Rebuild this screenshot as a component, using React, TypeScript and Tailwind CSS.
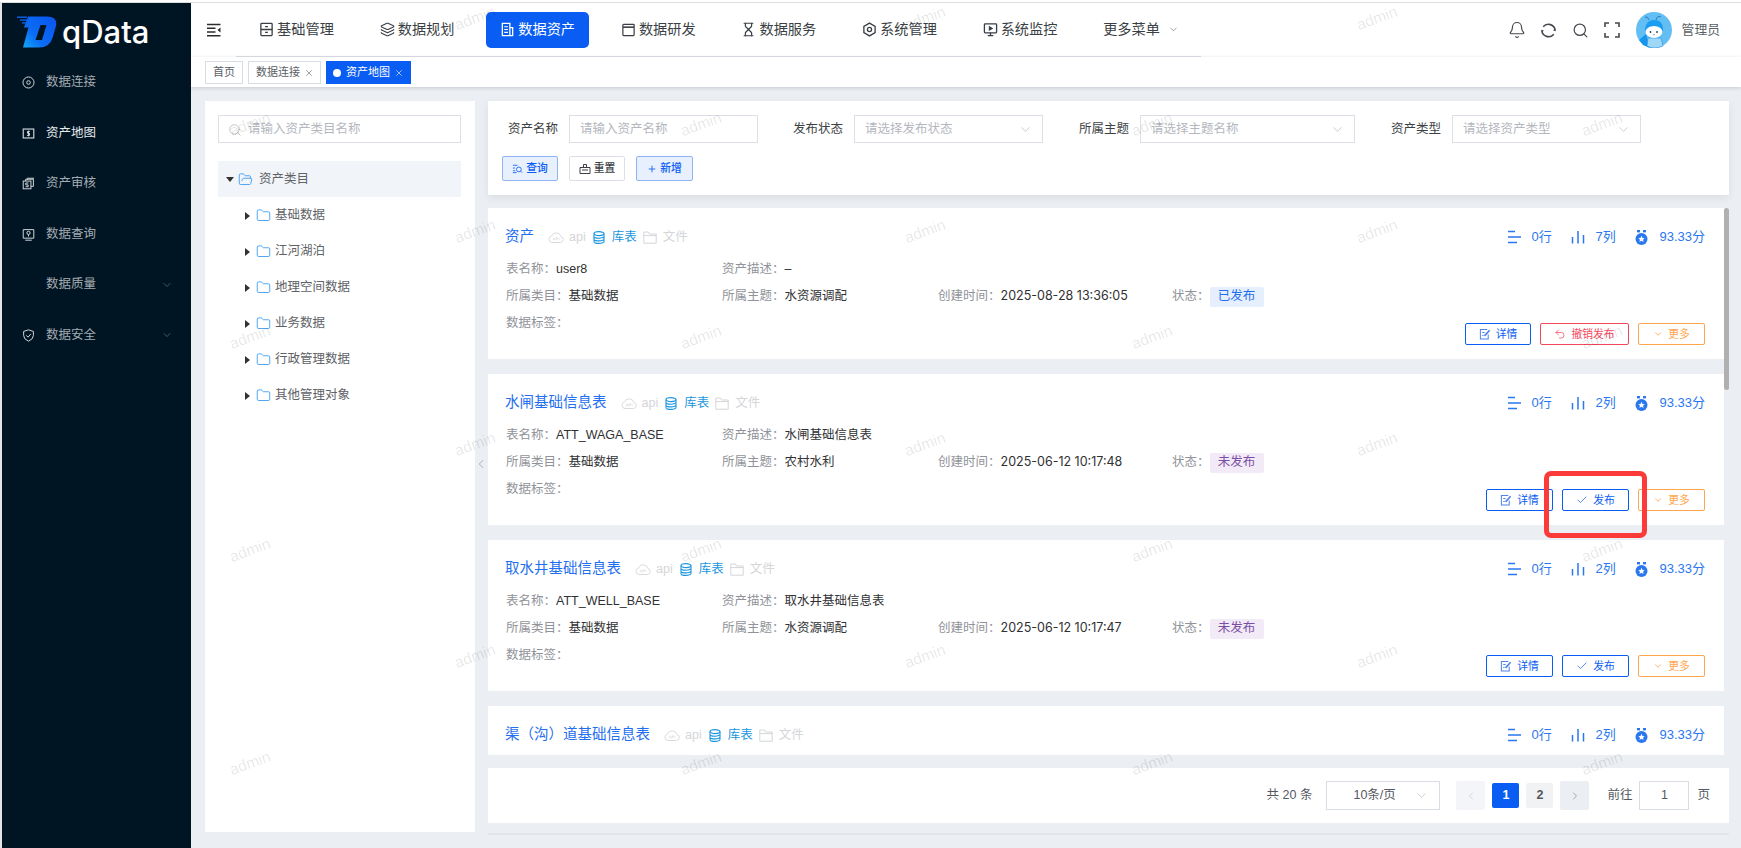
import { useMemo } from 'react'
import {
  Bell, ChevronDown, ChevronLeft, ChevronRight, Check, Folder, FolderOpen, Hourglass, Layers, Plus, Search, Undo2, X,
} from 'lucide-react'

const sans = "font-['Liberation_Sans','Noto_Sans_CJK_SC',sans-serif]"

interface IconProps {
  className?: string
}

function Svg({ className, children, box = '0 0 16 16' }: IconProps & { children: React.ReactNode; box?: string }) {
  return (
    <svg viewBox={box} fill="none" stroke="currentColor" strokeWidth="1.2" className={className}>
      {children}
    </svg>
  )
}

function Logo() {
  return (
    <svg viewBox="0 0 40 32" className="h-[32px] w-[40px]">
      <defs>
        <linearGradient id="logoFill" x1="0" y1="1" x2="1" y2="0.2">
          <stop offset="0" stopColor="#12a8f8" />
          <stop offset="0.4" stopColor="#0b6cf4" />
          <stop offset="1" stopColor="#0a58f0" />
        </linearGradient>
      </defs>
      <path
        fillRule="evenodd"
        d="M11 0.5 H30 Q40.5 0.5 39 10 L35.5 22 Q32.5 31.5 22 31.5 H6 L11.5 11.5 H7 Z M23.5 9 H29.5 L25 24 H18.5 Z"
        fill="url(#logoFill)"
      />
      <g fill="#0b62f2">
        <rect x="0" y="0.5" width="10" height="1.4" />
        <rect x="3" y="3.4" width="8" height="1.4" />
        <rect x="5" y="6.2" width="6" height="1.4" />
      </g>
    </svg>
  )
}

function Avatar() {
  return (
    <svg viewBox="0 0 36 36" className="h-[36px] w-[36px]">
      <circle cx="18" cy="18" r="18" fill="#63bff3" />
      <path d="M3 28 L10 22 L14 36 L7 33 Z" fill="#1496ee" />
      <path d="M12 26 H25 L27 34 Q18 38 11 34 Z" fill="#9fd8f7" stroke="#2a8fd8" strokeWidth="0.6" />
      <path d="M9 17 Q10 8 18 8 Q27 8 27 17 Q27 26 18 26 Q9 26 9 17 Z" fill="#1a9cf0" />
      <ellipse cx="18" cy="20" rx="8.5" ry="6" fill="#ffffff" />
      <circle cx="14.5" cy="20" r="0.9" fill="#25424f" />
      <circle cx="21" cy="20" r="0.9" fill="#25424f" />
      <path d="M17 22.5 Q18 23.5 19 22.5" stroke="#25424f" strokeWidth="0.5" fill="none" />
      <path d="M13 8 Q12 4 9 5 M20 8 Q21 3 25 5" stroke="#1a6fb0" strokeWidth="0.8" fill="none" />
    </svg>
  )
}

function MenuIcon({ name }: { name: string }) {
  const cls = 'h-[15px] w-[15px] shrink-0'
  if (name === 'base')
    return (
      <Svg className={cls}>
        <rect x="2" y="1.5" width="12" height="13" rx="0.8" strokeWidth="1.4" />
        <path d="M2 8 H14 M6.5 5 H9.5 M6.5 11 H9.5" strokeWidth="1.4" />
      </Svg>
    )
  if (name === 'plan') return <Layers className={cls} strokeWidth={1.8} />
  if (name === 'asset')
    return (
      <Svg className={cls}>
        <path d="M2.5 1.5 H10.5 V14.5 H2.5 Z M10.5 6 H13.5 V14.5 H10.5" strokeWidth="1.4" />
        <path d="M4.5 5 H8.5 M4.5 8 H8.5 M4.5 11 H8.5" strokeWidth="1.2" />
      </Svg>
    )
  if (name === 'dev')
    return (
      <Svg className={cls}>
        <rect x="2" y="2.5" width="12" height="12" rx="0.8" strokeWidth="1.3" />
        <path d="M2 5.5 H14" strokeWidth="1.7" />
      </Svg>
    )
  if (name === 'service') return <Hourglass className={cls} strokeWidth={1.9} />
  if (name === 'system')
    return (
      <Svg className={cls}>
        <path d="M8 1.2 L14 4.6 V11.4 L8 14.8 L2 11.4 V4.6 Z" strokeWidth="1.4" />
        <circle cx="8" cy="8" r="2.2" strokeWidth="1.4" />
      </Svg>
    )
  return (
    <Svg className={cls}>
      <rect x="1.5" y="2" width="13" height="9.5" rx="0.8" strokeWidth="1.4" />
      <path d="M8 11.5 V14.5 M5 14.5 H11" strokeWidth="1.4" />
      <path d="M6.8 5 L9.8 6.8 L6.8 8.5 Z" fill="currentColor" />
    </Svg>
  )
}

function SideIcon({ name }: { name: string }) {
  const cls = 'h-[13px] w-[13px]'
  if (name === 'link')
    return (
      <Svg className={cls}>
        <circle cx="8" cy="8" r="6.8" />
        <circle cx="8" cy="8" r="2.2" />
      </Svg>
    )
  if (name === 'map')
    return (
      <Svg className={cls}>
        <rect x="1.5" y="2.5" width="13" height="11" strokeWidth="1.4" />
        <path d="M9.8 5.4 H6.8 V7.8 H9.2 V10.4 H6.2 M8 4.5 V11.5" />
      </Svg>
    )
  if (name === 'audit')
    return (
      <Svg className={cls}>
        <rect x="1.5" y="5" width="9.5" height="9.5" />
        <path d="M4.5 5 V2.8 H14 V11.5 H11 M6.5 2.8 V1.5 H14.8" />
        <path d="M8 7.4 H4.6 V9.7 H7.6 V12 H4.4" />
      </Svg>
    )
  if (name === 'query')
    return (
      <Svg className={cls}>
        <path d="M1.5 2 H14.5 V12.5 H1.5 Z M4 15 H12" />
        <circle cx="8" cy="6" r="2" />
        <path d="M8 8 V10.5" />
      </Svg>
    )
  return (
    <Svg className={cls}>
      <path d="M8 1 L14 3 V8 Q14 12.5 8 15 Q2 12.5 2 8 V3 Z" />
      <path d="M5.2 7.8 L7.4 10 L11 6" />
    </Svg>
  )
}

const sideItems = [
  { label: '数据连接', icon: 'link' },
  { label: '资产地图', icon: 'map', active: true },
  { label: '资产审核', icon: 'audit' },
  { label: '数据查询', icon: 'query' },
  { label: '数据质量', arrow: true },
  { label: '数据安全', icon: 'safe', arrow: true },
]

function Sidebar() {
  return (
    <aside className="z-10 flex w-[189px] shrink-0 flex-col bg-[#001524]">
      <div className="flex h-[54.5px] items-start pl-[15px] pt-[13px]">
        <Logo />
        <span className="-mt-[6px] ml-[5px] font-['Inter',sans-serif] text-[31px] font-medium leading-[44px] text-white">qData</span>
      </div>
      {sideItems.map((item) => (
        <div key={item.label} className={`flex h-[50.5px] items-center text-[12.5px] ${item.active ? 'text-[#e8ebed]' : 'text-[#a3abb1]'}`}>
          <span className="flex w-[44px] justify-end pr-[11px] text-[#d5d9dc]">{item.icon && <SideIcon name={item.icon} />}</span>
          <span>{item.label}</span>
          {item.arrow && <ChevronDown className="ml-auto mr-[18px] h-[12px] w-[12px] text-[#8a949b]" strokeWidth={1} />}
        </div>
      ))}
    </aside>
  )
}

const navItems = [
  { label: '基础管理', icon: 'base' },
  { label: '数据规划', icon: 'plan' },
  { label: '数据资产', icon: 'asset', active: true },
  { label: '数据研发', icon: 'dev' },
  { label: '数据服务', icon: 'service' },
  { label: '系统管理', icon: 'system' },
  { label: '系统监控', icon: 'monitor' },
]

function Header() {
  return (
    <header className="flex h-[54px] bg-white">
      <div className="flex w-[45px] shrink-0 items-center justify-center">
        <svg viewBox="0 0 15 14" className="h-[14px] w-[15px] text-[#2c2c2c]" fill="none" stroke="currentColor" strokeWidth="1.4">
          <path d="M1 1.5 H14.5 M1 5.3 H9.5 M1 9 H9.5 M1 12.8 H14.5" />
          <path d="M14.5 4.6 L11.5 7.1 L14.5 9.6 Z" fill="currentColor" stroke="none" />
        </svg>
      </div>
      <nav className="flex h-[54px] w-[965px] shrink-0 items-center gap-[17.6px] border-b border-[#dcdfe6] pl-[9px] text-[14.2px] text-[#3a3f45]">
        {navItems.map((item) => (
          <div
            key={item.label}
            className={`flex h-[36px] w-[103px] shrink-0 items-center justify-center gap-[3px] rounded-[5px] ${item.active ? 'bg-[#0a5df2] text-white' : ''}`}
          >
            <MenuIcon name={item.icon} />
            <span>{item.label}</span>
          </div>
        ))}
        <div className="flex items-center gap-[8px] pl-[14px]">
          <span>更多菜单</span>
          <ChevronDown className="h-[11px] w-[11px] text-[#70757c]" strokeWidth={1.5} />
        </div>
      </nav>
      <div className="flex flex-1 items-center justify-end pr-[21px] text-[#44494f]">
        <Bell className="h-[18px] w-[18px]" strokeWidth={1.6} />
        <svg viewBox="0 0 16 16" className="ml-[14px] h-[17px] w-[17px]" fill="none" stroke="currentColor" strokeWidth="1.5">
          <path d="M3 4.5 A6.4 6.4 0 0 1 14.3 8 M13 11.5 A6.4 6.4 0 0 1 1.7 8" />
          <path d="M1.2 7.4 L1.9 9.6 L3.7 8 M14.8 8.6 L14.1 6.4 L12.3 8" fill="currentColor" stroke="none" />
        </svg>
        <Search className="ml-[15px] h-[17px] w-[17px]" strokeWidth={1.7} />
        <svg viewBox="0 0 16 16" className="ml-[15px] h-[16px] w-[16px]" fill="none" stroke="currentColor" strokeWidth="1.6">
          <path d="M1 5 V1 H5 M11 1 H15 V5 M15 11 V15 H11 M5 15 H1 V11" />
        </svg>
        <span className="ml-[16px]"><Avatar /></span>
        <span className="ml-[10px] text-[12.8px] text-[#5a5f66]">管理员</span>
      </div>
    </header>
  )
}

function TagsBar() {
  return (
    <div className="z-10 flex h-[30px] items-start gap-[5px] bg-white pl-[14px] pt-[4px] text-[11px] text-[#5a5e66] shadow-[0_1px_4px_rgba(0,21,41,0.16)]">
      <span className="flex h-[23px] items-center border border-[#d8dce5] px-[7px]">首页</span>
      <span className="flex h-[23px] w-[73px] items-center gap-[4px] border border-[#d8dce5] pl-[7px]">
        数据连接
        <X className="h-[10px] w-[10px]" strokeWidth={1.4} />
      </span>
      <span className="flex h-[23px] w-[85px] items-center gap-[4px] bg-[#0a5df2] pl-[7px] text-white">
        <span className="h-[8px] w-[8px] rounded-full bg-white" />
        <span className="ml-[1px]">资产地图</span>
        <X className="h-[10px] w-[10px]" strokeWidth={1.4} />
      </span>
    </div>
  )
}

const treeItems = ['基础数据', '江河湖泊', '地理空间数据', '业务数据', '行政管理数据', '其他管理对象']

function TreePanel() {
  return (
    <section className="h-[731px] w-[270px] shrink-0 bg-white px-[13px] pt-[14px] text-[12.5px] text-[#606266]">
      <div className="relative flex h-[28px] w-[243px] items-center border border-[#dcdfe6] pl-[29px] text-[#b4b7be]">
        <Search className="absolute left-[9px] top-[7px] h-[14px] w-[14px]" strokeWidth={1.4} />
        请输入资产类目名称
      </div>
      <div className="mt-[18px] flex h-[36px] w-[243px] items-center bg-[#f1f4f8] pt-[1px]">
        <span className="ml-[8px] h-0 w-0 border-x-[4px] border-t-[5px] border-x-transparent border-t-[#333]" />
        <FolderOpen className="ml-[4px] h-[15px] w-[15px] text-[#3b9af0]" strokeWidth={1.4} />
        <span className="ml-[6px]">资产类目</span>
      </div>
      {treeItems.map((t) => (
        <div key={t} className="flex h-[36px] items-center pt-[1px]">
          <span className="ml-[27px] h-0 w-0 border-y-[4px] border-l-[5px] border-y-transparent border-l-[#333]" />
          <Folder className="ml-[6px] h-[15px] w-[15px] text-[#3b9af0]" strokeWidth={1.4} />
          <span className="ml-[4px]">{t}</span>
        </div>
      ))}
    </section>
  )
}

function Field({ label, placeholder, width, select, gap = 35 }: { label: string; placeholder: string; width: number; select?: boolean; gap?: number }) {
  return (
    <div className="flex items-center" style={{ marginRight: gap }}>
      <span className="mr-[11px] w-[50px] shrink-0 whitespace-nowrap text-[#3c3f44]">{label}</span>
      <div className="flex h-[28px] items-center justify-between border border-[#dcdfe6] pl-[10px] pr-[9px] text-[#b4b7be]" style={{ width }}>
        <span>{placeholder}</span>
        {select && <ChevronDown className="h-[15px] w-[15px] text-[#b4b7be]" strokeWidth={1.1} />}
      </div>
    </div>
  )
}

function FilterPanel() {
  return (
    <section className="h-[94px] bg-white pl-[14px] pt-[14px] text-[12.5px] shadow-[0_3px_8px_rgba(0,21,41,0.07)]">
      <div className="flex pl-[6px]">
        <Field label="资产名称" placeholder="请输入资产名称" width={189} />
        <Field label="发布状态" placeholder="请选择发布状态" width={189} select gap={36} />
        <Field label="所属主题" placeholder="请选择主题名称" width={215} select gap={36} />
        <Field label="资产类型" placeholder="请选择资产类型" width={189} select />
      </div>
      <div className="mt-[13px] flex gap-[11px] text-[10.8px] font-medium">
        <button className="flex h-[25px] w-[56px] items-center justify-center gap-[3px] rounded-[2px] border border-[#8fb4f5] bg-[#e8f0fe] text-[#0a5df2]">
          <svg viewBox="0 0 12 12" className="h-[11px] w-[11px]" fill="none" stroke="currentColor" strokeWidth="0.9">
            <path d="M1 2.5 H6 M1 5.5 H3.5 M1 8.5 H3.5 M1 10.5 H5" />
            <circle cx="7.5" cy="7" r="2.6" />
            <path d="M9.5 9 L11 10.5" />
          </svg>
          查询
        </button>
        <button className="flex h-[25px] w-[56px] items-center justify-center gap-[3px] rounded-[2px] border border-[#dcdfe6] bg-white text-[#3c3f44]">
          <svg viewBox="0 0 12 12" className="h-[12px] w-[12px]" fill="none" stroke="currentColor" strokeWidth="1">
            <path d="M4.5 4.5 V1.5 H7.5 V4.5 M1 4.5 H11 V10.5 H1 Z M3 7 H9" />
          </svg>
          重置
        </button>
        <button className="flex h-[25px] w-[57px] items-center justify-center gap-[3px] rounded-[2px] border border-[#8fb4f5] bg-[#e8f0fe] text-[#0a5df2]">
          <Plus className="h-[10px] w-[10px]" strokeWidth={2} />
          新增
        </button>
      </div>
    </section>
  )
}

function CloudIcon() {
  return (
    <svg viewBox="0 0 16 13" className="h-[13px] w-[16px]" fill="none" stroke="currentColor" strokeWidth="0.9">
      <path d="M4 11.5 H12.5 A3 3 0 0 0 13 5.6 A5 5 0 0 0 3.5 5 A3.3 3.3 0 0 0 4 11.5 Z" />
      <path d="M5 9.3 L6 6.8 L7 9.3 M8 9.3 V6.8 H9.4 V8 H8 M11 6.8 V9.3" strokeWidth="0.6" />
    </svg>
  )
}

function DbIcon() {
  return (
    <svg viewBox="0 0 12 13" className="h-[13px] w-[12px]" fill="none" stroke="currentColor" strokeWidth="1.1">
      <ellipse cx="6" cy="2.6" rx="5" ry="2" />
      <path d="M1 2.6 V10.4 C1 11.5 3 12.4 6 12.4 C9 12.4 11 11.5 11 10.4 V2.6 M1 5.2 C1 6.3 3 7.2 6 7.2 C9 7.2 11 6.3 11 5.2 M1 7.9 C1 9 3 9.9 6 9.9 C9 9.9 11 9 11 7.9" />
    </svg>
  )
}

function FileFolderIcon() {
  return (
    <svg viewBox="0 0 14 13" className="h-[13px] w-[14px]" fill="none" stroke="currentColor" strokeWidth="1">
      <path d="M0.8 1 H5.5 L6.5 3 H13.2 V12.2 H0.8 Z M0.8 4.6 H13.2" />
    </svg>
  )
}

function RowsIcon() {
  return (
    <svg viewBox="0 0 15 14" className="h-[14px] w-[15px]" fill="none" stroke="currentColor" strokeWidth="1.5">
      <path d="M1 1.5 H8 M1 7 H14 M1 12.5 H10" />
    </svg>
  )
}

function ColsIcon() {
  return (
    <svg viewBox="0 0 14 14" className="h-[14px] w-[14px]" fill="none" stroke="currentColor" strokeWidth="1.5">
      <path d="M1.5 7 V13.5 M7 1 V13.5 M12.5 5 V13.5" />
    </svg>
  )
}

function MedalIcon() {
  return (
    <svg viewBox="0 0 13 15" className="h-[15px] w-[13px]" fill="currentColor">
      <rect x="2" y="0" width="3" height="2.4" />
      <rect x="8" y="0" width="3" height="2.4" />
      <circle cx="6.5" cy="9" r="6" />
      <path d="M6.5 5.8 L7.5 8 L9.7 8.2 L8 9.7 L8.6 12 L6.5 10.8 L4.4 12 L5 9.7 L3.3 8.2 L5.5 8 Z" fill="#fff" />
    </svg>
  )
}

function ActionButton({ tone, width, children }: { tone: 'blue' | 'red' | 'orange'; width: number; children: React.ReactNode }) {
  const toneClass =
    tone === 'blue' ? 'border-[#0a5df2] text-[#0a5df2]' : tone === 'red' ? 'border-[#f5475c] text-[#f5475c]' : 'border-[#ffa64d] text-[#ffa64d]'
  return (
    <button className={`flex h-[21.5px] items-center justify-center gap-[5px] rounded-[2px] border bg-white text-[10.8px] ${toneClass}`} style={{ width }}>
      {children}
    </button>
  )
}

function EditIcon() {
  return (
    <svg viewBox="0 0 13 13" className="h-[12px] w-[12px] text-[#4f83ee]" fill="none" stroke="currentColor" strokeWidth="1.1">
      <path d="M10 7 V12 H1.5 V1.5 H9 M3.5 5 H6 M3.5 8 H5" />
      <path d="M6 8.5 L11.5 2.5" strokeWidth="1.8" />
    </svg>
  )
}

interface Asset {
  title: string
  table?: string
  desc?: string
  category?: string
  topic?: string
  created?: string
  cols: string
  published?: boolean
}

const assets: Asset[] = [
  { title: '资产', table: 'user8', desc: '–', category: '基础数据', topic: '水资源调配', created: '2025-08-28 13:36:05', cols: '7列', published: true },
  { title: '水闸基础信息表', table: 'ATT_WAGA_BASE', desc: '水闸基础信息表', category: '基础数据', topic: '农村水利', created: '2025-06-12 10:17:48', cols: '2列', published: false },
  { title: '取水井基础信息表', table: 'ATT_WELL_BASE', desc: '取水井基础信息表', category: '基础数据', topic: '水资源调配', created: '2025-06-12 10:17:47', cols: '2列', published: false },
  // 只露出标题行，其余内容在滚动区外
  { title: '渠（沟）道基础信息表', cols: '2列' },
]

function Label({ children, width }: { children: React.ReactNode; width?: number }) {
  return (
    <span className="flex items-center whitespace-nowrap" style={{ width }}>
      {children}
    </span>
  )
}

function AssetCard({ asset }: { asset: Asset }) {
  const clipped = !asset.table
  return (
    <article className={`shrink-0 bg-white pl-[17px] pr-[19px] pt-[16px] text-[12.5px] ${clipped ? 'h-[49px]' : 'h-[151px]'}`}>
      <div className="flex h-[26px] items-center">
        <span className="text-[14.5px] text-[#1f6fef]">{asset.title}</span>
        <span className="ml-[14px] flex items-center gap-[5px] text-[#d4d6d9]">
          <CloudIcon />
          api
        </span>
        <span className="ml-[7px] flex items-center gap-[7px] text-[#1a96df]">
          <DbIcon />
          库表
        </span>
        <span className="ml-[6px] flex items-center gap-[6px] text-[#d4d6d9]">
          <FileFolderIcon />
          文件
        </span>
        <div className="ml-auto flex items-center text-[13px] text-[#2b77ef]">
          <RowsIcon />
          <span className="ml-[9px] w-[40px]">0行</span>
          <ColsIcon />
          <span className="ml-[10px] w-[40px]">{asset.cols}</span>
          <MedalIcon />
          <span className="ml-[11px]">93.33分</span>
        </div>
      </div>
      {!clipped && (
        <>
          <div className="mt-[6px] flex h-[27px] items-center pl-[1px]">
            <Label width={216}>
              <span className="text-[#909399]">表名称：</span>
              <span className="text-[#303133]">{asset.table}</span>
            </Label>
            <Label>
              <span className="text-[#909399]">资产描述：</span>
              <span className="text-[#303133]">{asset.desc}</span>
            </Label>
          </div>
          <div className="flex h-[27px] items-center pl-[1px]">
            <Label width={216}>
              <span className="text-[#909399]">所属类目：</span>
              <span className="text-[#303133]">{asset.category}</span>
            </Label>
            <Label width={216}>
              <span className="text-[#909399]">所属主题：</span>
              <span className="text-[#303133]">{asset.topic}</span>
            </Label>
            <Label width={234}>
              <span className="text-[#909399]">创建时间：</span>
              <span className="font-['Inter',sans-serif] text-[#303133]">{asset.created}</span>
            </Label>
            <Label>
              <span className="text-[#909399]">状态：</span>
              <span className={`flex h-[20px] w-[54px] items-center justify-center rounded-[2px] ${asset.published ? 'bg-[#e6effd] text-[#1f6fef]' : 'bg-[#f2eaf7] text-[#7a4ea5]'}`}>
                {asset.published ? '已发布' : '未发布'}
              </span>
            </Label>
          </div>
          <div className="flex items-start pl-[1px]">
            <span className="flex h-[26px] items-center text-[#909399]">数据标签：</span>
            <div className="ml-auto mt-[13px] flex gap-[9px]">
              <ActionButton tone="blue" width={asset.published ? 66 : 67}>
                <EditIcon />
                详情
              </ActionButton>
              {asset.published ? (
                <ActionButton tone="red" width={89}>
                  <Undo2 className="h-[12px] w-[12px]" strokeWidth={1.5} />
                  撤销发布
                </ActionButton>
              ) : (
                <ActionButton tone="blue" width={67}>
                  <Check className="h-[12px] w-[12px]" strokeWidth={1.4} />
                  发布
                </ActionButton>
              )}
              <ActionButton tone="orange" width={67}>
                <ChevronDown className="h-[10px] w-[10px]" strokeWidth={2} />
                更多
              </ActionButton>
            </div>
          </div>
        </>
      )}
    </article>
  )
}

function Pagination() {
  return (
    <section className="flex h-[55px] items-center justify-end bg-white pr-[19px] text-[12.5px] text-[#54585f]">
      <span>共 20 条</span>
      <div className="ml-[14px] flex h-[29px] w-[114px] items-center justify-between border border-[#d8dce5] pl-[26px] pr-[10px]">
        <span>10条/页</span>
        <ChevronDown className="h-[15px] w-[15px] text-[#b4b7be]" strokeWidth={1.1} />
      </div>
      <span className="ml-[16px] flex h-[29px] w-[29px] items-center justify-center rounded-[2px] bg-[#f3f5f8] text-[#b8bcc2]">
        <ChevronLeft className="h-[12px] w-[12px]" strokeWidth={1.2} />
      </span>
      <span className="ml-[7px] flex h-[25px] w-[27px] items-center justify-center rounded-[2px] bg-[#0a5df2] text-[12.5px] font-bold text-white">1</span>
      <span className="ml-[7px] flex h-[25px] w-[27px] items-center justify-center rounded-[2px] bg-[#f1f2f4] text-[12.5px] font-bold text-[#54585f]">2</span>
      <span className="ml-[7px] flex h-[29px] w-[29px] items-center justify-center rounded-[2px] bg-[#ebeef2] text-[#70757c]">
        <ChevronRight className="h-[12px] w-[12px]" strokeWidth={1.2} />
      </span>
      <span className="ml-[18px]">前往</span>
      <span className="ml-[7px] flex h-[29px] w-[50px] items-center justify-center border border-[#d8dce5]">1</span>
      <span className="ml-[8px]">页</span>
    </section>
  )
}

function Watermarks() {
  const marks = useMemo(() => {
    const list: { x: number; y: number }[] = []
    for (let row = 0; row < 8; row++) {
      const xs = row % 2 === 0 ? [475, 925, 1377] : [250, 701, 1152, 1602]
      for (const x of xs) list.push({ x, y: 18 + row * 106.4 })
    }
    return list
  }, [])
  return (
    <>
      {marks.map((m) => (
        <span
          key={`${m.x}-${m.y}`}
          className="pointer-events-none absolute z-30 -translate-x-1/2 -translate-y-1/2 -rotate-[20deg] text-[15.5px] text-[#000]/10"
          style={{ left: m.x, top: m.y }}
        >
          admin
        </span>
      ))}
    </>
  )
}

export default function App() {
  return (
    <div className={`relative h-[848px] w-[1741px] overflow-hidden bg-[#ebeef2] ${sans}`}>
      <div className="h-[3px] border-b border-[#dddddd] bg-white" />
      <div className="flex h-[845px]">
        <div className="w-[2px] shrink-0 bg-[#e4e4e4]" />
        <Sidebar />
        <main className="relative flex min-w-0 flex-1 flex-col">
          <Header />
          <TagsBar />
          <div className="relative flex flex-1 items-start gap-[13px] pl-[14px] pt-[14px]">
            <TreePanel />
            <ChevronLeft className="absolute left-[283px] top-[370px] h-[14px] w-[14px] text-[#909399]" strokeWidth={1.2} />
            <div className="flex w-[1241px] shrink-0 flex-col gap-[13px]">
              <FilterPanel />
              <div className="relative h-[547px] overflow-hidden pr-[5px]">
                <div className="flex flex-col gap-[15px]">
                  {assets.map((a) => (
                    <AssetCard key={a.title} asset={a} />
                  ))}
                </div>
                <span className="absolute right-0 top-0 h-[182px] w-[5px] rounded-full bg-[#b0b0b0]" />
              </div>
              <div>
                <Pagination />
                <div className="mt-[10px] h-[2px] bg-[#e2e5e9]" />
              </div>
            </div>
          </div>
        </main>
      </div>
      <div className="absolute left-[1544px] top-[471px] z-40 h-[67px] w-[103px] rounded-[7px] border-[5px] border-[#fc3a3a]" />
      <Watermarks />
    </div>
  )
}
